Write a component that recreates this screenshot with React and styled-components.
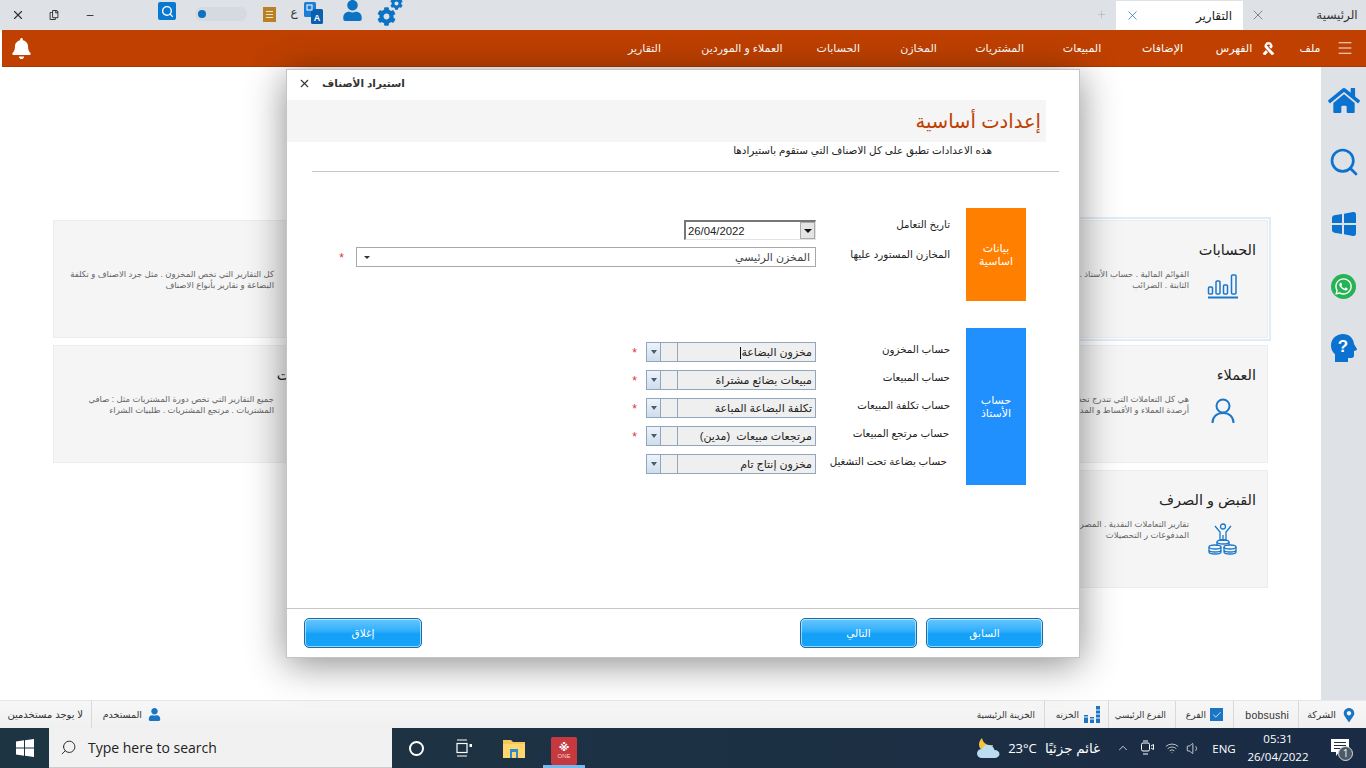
import React from 'react';
import styled, { createGlobalStyle } from 'styled-components';
import { X, Plus, Search, Menu, ChevronUp, Wifi, Volume1, Check } from 'lucide-react';
import { FaHome, FaUser, FaCog, FaWhatsapp, FaBell, FaRibbon, FaMapMarkerAlt, FaRegCopy } from 'react-icons/fa';

const arabic = '"Liberation Sans", "DejaVu Sans", "Noto Sans", sans-serif';

const GlobalStyle = createGlobalStyle`
  html, body { margin: 0; padding: 0; height: 100%; overflow: hidden; background: #fff; }
  body { font-family: ${arabic}; color: #222; }
  * { box-sizing: border-box; }
`;

const Page = styled.div`
  width: 1366px;
  height: 768px;
  display: flex;
  flex-direction: column;
`;

/* top strip with tabs */
const TopBar = styled.div`
  height: 30px;
  background: #dee1e6;
  display: flex;
  justify-content: space-between;
`;
const ToolGroup = styled.div`
  display: flex;
  align-items: flex-start;
`;
const ToolSlot = styled.div`
  width: ${(p) => p.$w}px;
  height: 30px;
  margin-left: ${(p) => p.$ml || 0}px;
  padding-top: ${(p) => p.$pt || 0}px;
  display: flex;
  justify-content: center;
  color: ${(p) => p.$color || '#333'};
  font-size: 12px;
`;
const SearchSquare = styled.div`
  width: 18px;
  height: 18px;
  border-radius: 2px;
  background: #0b78d0;
  color: #fff;
  display: flex;
  align-items: center;
  justify-content: center;
`;
const Toggle = styled.div`
  width: 52px;
  height: 14px;
  margin-top: 7px;
  border-radius: 7px;
  background: #d5d9e0;
  padding: 3px 3px;
  &::before {
    content: '';
    display: block;
    width: 8px;
    height: 8px;
    border-radius: 50%;
    background: #0b6fc2;
  }
`;
const GearWrap = styled.div`
  position: relative;
  width: 26px;
  height: 26px;
  color: #0b72c4;
`;
const SmallGear = styled.span`
  position: absolute;
  right: 0;
  top: -3px;
  line-height: 0;
`;
const BigGear = styled.span`
  position: absolute;
  left: 0;
  bottom: 0;
  line-height: 0;
`;
const Tabs = styled.div`
  display: flex;
  align-items: flex-start;
  padding-right: 3px;
`;
const PlusSlot = styled.div`
  width: 30px;
  height: 29px;
  color: #9aa0a6;
  display: flex;
  align-items: center;
  justify-content: center;
`;
const TabActive = styled.div`
  width: 127px;
  height: 29px;
  margin-top: 1px;
  background: #fff;
  padding: 0 11px 0 9px;
  display: flex;
  align-items: center;
  justify-content: space-between;
  font-size: 12px;
  color: #222;
`;
const TabClose = styled.div`
  width: 29px;
  height: 30px;
  color: #555;
  display: flex;
  align-items: center;
  justify-content: center;
`;
const TabIdle = styled.div`
  width: 52px;
  height: 30px;
  font-size: 12px;
  color: #333;
  display: flex;
  align-items: center;
  justify-content: center;
  margin-left: 39px;
`;

/* orange menu */
const NavBar = styled.div`
  height: 37px;
  margin-left: 2px;
  background: #bf4000;
  color: #fff;
  display: flex;
  align-items: center;
  justify-content: space-between;
  padding: 0 12px 0 9px;
  border-bottom: 1px solid #a93900;
`;
const NavItems = styled.nav`
  display: flex;
  align-items: center;
  direction: rtl;
`;
const NavItem = styled.span`
  width: ${(p) => p.$w}px;
  margin-left: ${(p) => p.$gap}px;
  font-size: 11px;
  text-align: center;
  white-space: nowrap;
`;
const NavIcon = styled.span`
  display: flex;
  margin-left: ${(p) => p.$gap}px;
`;

/* page body */
const Main = styled.main`
  flex: 1;
  position: relative;
  display: flex;
  min-height: 0;
`;
const Content = styled.div`
  flex: 1;
  background: #fff;
  padding: 153px 53px 0 53px;
`;
const CardGrid = styled.div`
  direction: rtl;
  display: grid;
  grid-template-columns: repeat(4, 300px);
  grid-auto-rows: 118px;
  column-gap: 5px;
  row-gap: 7px;
`;
const Card = styled.section`
  grid-column: ${(p) => p.$col};
  background: #f5f5f6;
  border: 1px solid #eaeef3;
  outline: ${(p) => (p.$active ? '2px solid #e2ecf8' : 'none')};
  outline-offset: 1px;
  padding: 18px 11px 0 0;
`;
const CardTitle = styled.h3`
  margin: 0;
  height: 22px;
  font-size: 14.5px;
  line-height: 22px;
  font-weight: 400;
  color: #222;
`;
const CardBody = styled.div`
  display: flex;
  margin-top: 8px;
`;
const CardIcon = styled.div`
  width: 67px;
  flex: none;
  display: flex;
  justify-content: center;
  color: #1b78c8;
  padding-top: 4px;
`;
const CardText = styled.p`
  margin: 0;
  font-size: 8.5px;
  line-height: 11px;
  color: #666;
  white-space: nowrap;
`;

const Rail = styled.aside`
  width: 45px;
  background: #dee1e6;
  display: flex;
  flex-direction: column;
  align-items: center;
  padding-top: 17px;
  gap: 30px;
  color: #0b72d0;
`;
const RailIcon = styled.div`
  width: 32px;
  height: 32px;
  display: flex;
  align-items: center;
  justify-content: center;
`;
const WhatsBadge = styled.div`
  width: 25px;
  height: 25px;
  border-radius: 50%;
  background: #25b354;
  color: #fff;
  display: flex;
  align-items: center;
  justify-content: center;
`;

/* modal */
const Modal = styled.div`
  position: absolute;
  left: 286px;
  top: 2px;
  width: 794px;
  height: 589px;
  background: #fff;
  border: 1px solid #c4c4c4;
  box-shadow: 0 6px 36px rgba(0, 0, 0, 0.45);
  direction: rtl;
  display: flex;
  flex-direction: column;
`;
const ModalTitle = styled.div`
  direction: ltr;
  height: 30px;
  display: flex;
  align-items: center;
  padding: 0 0 4px 11px;
  gap: 11px;
  font-size: 10.5px;
  font-weight: 700;
  color: #333;
`;
const Band = styled.div`
  height: 42px;
  margin-right: 33px;
  background: #f5f5f5;
  padding-right: 5px;
  display: flex;
  align-items: center;
  color: #bf4000;
  font-size: 19.500px;
`;
const Note = styled.div`
  height: 30px;
  margin-right: 87px;
  font-size: 10.4px;
  color: #222;
  padding-top: 2px;
`;
const Rule = styled.hr`
  margin: -1px 20px 0 25px;
  border: 0;
  border-top: 1px solid #c6c6c6;
`;
const ModalBody = styled.div`
  flex: 1;
  padding: 36px 53px 0 0;
  display: flex;
  flex-direction: column;
  gap: 27px;
`;
const Section = styled.div`
  display: flex;
  height: ${(p) => p.$h}px;
`;
const SectionTag = styled.div`
  width: 60px;
  flex: none;
  background: ${(p) => p.$color};
  color: #fff;
  font-size: 11px;
  line-height: 13px;
  text-align: center;
  display: flex;
  align-items: center;
  justify-content: center;
`;
const Fields = styled.div`
  padding: ${(p) => p.$top}px 16px 0 0;
  display: flex;
  flex-direction: column;
  gap: ${(p) => p.$gap}px;
`;
const FieldRow = styled.div`
  display: flex;
  align-items: center;
  height: 20px;
`;
const Label = styled.label`
  width: 134px;
  flex: none;
  padding-right: ${(p) => p.$indent || 0}px;
  font-size: 10.3px;
  color: #222;
  position: relative;
  top: ${(p) => p.$lift ?? -3}px;
  white-space: nowrap;
`;
const DateBox = styled.div`
  direction: ltr;
  width: 132px;
  height: 20px;
  background: #fff;
  border: 1px solid #e2e2e2;
  border-top: 2px solid #777;
  border-left: 2px solid #777;
  display: flex;
  align-items: center;
  justify-content: space-between;
  padding-left: 2px;
  font-size: 11.3px;
  color: #222;
`;
const DateBtn = styled.span`
  width: 15px;
  height: 17px;
  background: #e4e4e4;
  border: 1px solid #aaa;
  display: flex;
  align-items: center;
  justify-content: center;
  &::after {
    content: '';
    border: 4px solid transparent;
    border-top: 4px solid #111;
    border-bottom: 0;
  }
`;
const SelectBox = styled.div`
  width: 460px;
  height: 20px;
  border: 1px solid #a8a8a8;
  background: #fff;
  display: flex;
  align-items: center;
  justify-content: space-between;
  padding: 0 5px;
  font-size: 11px;
  color: #444;
  &::after {
    content: '';
    margin-left: 2px;
    border: 3px solid transparent;
    border-top: 3px solid #333;
    border-bottom: 0;
  }
`;
const Star = styled.span`
  color: #d33;
  font-size: 12px;
  margin-right: ${(p) => p.$gap}px;
  line-height: 1;
  position: relative;
  top: 1px;
`;
const Combo = styled.div`
  width: 170px;
  height: 20px;
  display: flex;
  border: 1px solid #8fa5c0;
  background: #efefef;
`;
const ComboText = styled.div`
  width: 138px;
  flex: none;
  padding-right: 3px;
  font-size: 11px;
  line-height: 18px;
  color: #222;
  white-space: pre;
  border-left: 1px solid #8fa5c0;
  overflow: hidden;
`;
const Caret = styled.span`
  display: inline-block;
  width: 1px;
  height: 12px;
  background: #111;
  vertical-align: middle;
`;
const ComboGap = styled.div`
  width: 16px;
  flex: none;
`;
const ComboBtn = styled.div`
  flex: 1;
  background: linear-gradient(#eef3fa, #cfdcec);
  border-right: 1px solid #8fa5c0;
  display: flex;
  align-items: center;
  justify-content: center;
  &::after {
    content: '';
    border: 3.5px solid transparent;
    border-top: 4px solid #4a5a70;
    border-bottom: 0;
  }
`;
const Footer = styled.footer`
  height: 49px;
  border-top: 1px solid #c6c6c6;
  display: flex;
  align-items: center;
  justify-content: space-between;
  padding: 0 36px 0 17px;
`;
const FooterGroup = styled.div`
  display: flex;
  gap: 9px;
`;
const Btn = styled.button`
  width: ${(p) => p.$w || 117}px;
  height: 30px;
  border: 1px solid #176ea8;
  border-radius: 5px;
  box-shadow: inset 0 0 0 1px rgba(255, 255, 255, 0.55);
  background: linear-gradient(#66c6ff 0%, #35b0fb 40%, #14a0f6 55%, #14a2f8 100%);
  color: #fff;
  font-family: inherit;
  font-size: 10.5px;
  padding: 0;
`;

/* status bar */
const StatusBar = styled.div`
  height: 28px;
  background: linear-gradient(#f7f7f7, #f0f0f0);
  border-top: 1px solid #e6e6e6;
  direction: rtl;
  display: flex;
  justify-content: space-between;
`;
const StatusGroup = styled.div`
  display: flex;
`;
const StatusCell = styled.div`
  width: ${(p) => p.$w}px;
  border-left: ${(p) => (p.$plain ? 'none' : '1px solid #d9d9d9')};
  display: flex;
  align-items: center;
  padding-right: ${(p) => p.$pr || 0}px;
  gap: ${(p) => p.$gap || 0}px;
  font-size: ${(p) => p.$size || 9.5}px;
  color: #333;
  white-space: nowrap;
`;
const Latin = styled.span`
  font-size: 10.5px;
  letter-spacing: 0.2px;
`;
const CheckBoxIcon = styled.span`
  width: 13px;
  height: 13px;
  background: #1a75c4;
  color: #fff;
  display: flex;
  align-items: center;
  justify-content: center;
`;

/* windows taskbar */
const Taskbar = styled.div`
  height: 40px;
  background: linear-gradient(90deg, #1d3542, #1c2f44 70%, #1a2b45);
  display: flex;
  align-items: center;
  color: #fff;
`;
const StartBtn = styled.div`
  width: 49px;
  height: 40px;
  display: flex;
  align-items: center;
  justify-content: center;
`;
const SearchBox = styled.div`
  width: 343px;
  height: 40px;
  background: #f1f1f1;
  border-bottom: 1px solid #ccc;
  color: #222;
  font-family: 'Open Sans', sans-serif;
  font-size: 14px;
  display: flex;
  align-items: center;
  gap: 11px;
  padding-left: 11px;
`;
const TaskSlot = styled.div`
  width: ${(p) => p.$w}px;
  height: 40px;
  margin-left: ${(p) => p.$ml || 0}px;
  position: relative;
  display: flex;
  align-items: center;
  justify-content: center;
`;
const Cortana = styled.span`
  width: 15px;
  height: 15px;
  border-radius: 50%;
  border: 2px solid #fff;
`;
const AppTile = styled.div`
  width: 26px;
  height: 28px;
  margin-top: 6px;
  background: #c63a3f;
  border-radius: 2px;
  text-align: center;
  font-size: 6px;
  line-height: 7px;
  color: #f3d0d0;
  padding-top: 5px;
`;
const AppMark = styled.div`
  font-size: 11px;
  line-height: 11px;
  font-weight: 700;
  color: #fff;
`;
const ActiveStrip = styled.span`
  position: absolute;
  left: 0;
  right: 0;
  bottom: 0;
  height: 3px;
  background: #76b9ed;
`;
const Tray = styled.div`
  margin-left: auto;
  display: flex;
  align-items: center;
  height: 40px;
  font-family: 'Open Sans', ${arabic};
  font-size: 12px;
`;
const TraySlot = styled.div`
  width: ${(p) => p.$w}px;
  margin-left: ${(p) => p.$ml || 0}px;
  text-align: center;
  display: flex;
  align-items: center;
  justify-content: center;
  white-space: nowrap;
  font-size: ${(p) => p.$size || 12}px;
`;
const Clock = styled.div`
  width: 72px;
  text-align: center;
  font-size: 11.5px;
  line-height: 18px;
`;
const NoticeWrap = styled.div`
  position: relative;
  width: 52px;
  height: 40px;
  display: flex;
  align-items: center;
  justify-content: center;
`;
const NoticeBadge = styled.span`
  position: absolute;
  right: 13px;
  bottom: 7px;
  width: 15px;
  height: 15px;
  border-radius: 50%;
  background: #4a5a66;
  border: 1px solid #ddd;
  font-size: 10px;
  line-height: 13px;
  text-align: center;
`;

const WinLogo = ({ size = 18, color = '#fff' }) => (
  <svg width={size} height={size} viewBox="0 0 18 18" fill={color}>
    <path d="M0 2.5 8 1.3V8.5H0ZM9 1.2 18 0V8.5H9ZM0 9.5H8V16.7L0 15.5ZM9 9.5H18V18L9 16.8Z" />
  </svg>
);

const RoundWindows = () => (
  <svg width="30" height="30" viewBox="0 0 30 30" fill="#0b72d0">
    <path d="M3 9C3 7.5 4 6.6 5.5 6.3L13 5V14H3ZM15 4.7 24 3C26 2.7 27 3.8 27 5.5V14H15ZM3 16H13V25L5.5 23.7C4 23.4 3 22.5 3 21ZM15 16H27V24.5C27 26.2 26 27.3 24 27L15 25.3Z" />
  </svg>
);

const HelpHead = () => (
  <svg width="30" height="32" viewBox="0 0 30 32">
    <path
      fill="#0b72d0"
      d="M14 2C7 2 2 7 2 13.5c0 4 1.6 6.6 4 8.8V30h13v-4h3.5c1.6 0 2.5-1 2.5-2.5V19l2.4-.8c.7-.3.8-.9.4-1.5L25 12C24.500 6 20 2 14 2Z"
    />
    <text x="14" y="20" fontSize="17" fontWeight="700" fill="#fff" textAnchor="middle" fontFamily="Liberation Sans">?</text>
  </svg>
);

const BookIcon = () => (
  <svg width="13" height="15" viewBox="0 0 13 15">
    <rect width="13" height="15" fill="#b98026" />
    <path d="M3 4.500h7M3 7.500h7M3 10.500h7" stroke="#f3e2c0" strokeWidth="1" />
  </svg>
);

const TranslateIcon = () => (
  <svg width="19" height="23" viewBox="0 0 19 23">
    <rect x="0" y="1" width="12" height="15" rx="1.5" fill="#1a7fd4" />
    <rect x="7" y="8" width="12" height="15" rx="1.500" fill="#0b5fb0" />
    <text x="13" y="20" fontSize="9" fontWeight="700" fill="#fff" textAnchor="middle" fontFamily="Liberation Sans">A</text>
    <rect x="3" y="4" width="5" height="5" fill="none" stroke="#fff" strokeWidth="1" />
  </svg>
);

const BarsIcon = () => (
  <svg width="32" height="26" viewBox="0 0 32 26" fill="none" stroke="#1b78c8" strokeWidth="1.5">
    <rect x="1.500" y="14" width="4" height="7" rx="1" />
    <rect x="9" y="8" width="4" height="13" rx="1" />
    <rect x="16.500" y="12" width="4" height="9" rx="1" />
    <rect x="24.500" y="2" width="4.500" height="19" rx="1" />
    <path d="M1 24.500H31" strokeWidth="2" />
  </svg>
);

const PersonIcon = () => (
  <svg width="24" height="26" viewBox="0 0 24 26" fill="none" stroke="#1b78c8" strokeWidth="2">
    <circle cx="12" cy="8" r="6.500" />
    <path d="M1.500 25c0-6 4-10 10.500-10s10.500 4 10.500 10" />
  </svg>
);

const CoinsIcon = () => (
  <svg width="30" height="32" viewBox="0 0 30 32" fill="none" stroke="#1b78c8" strokeWidth="1.300">
    <circle cx="15" cy="3.500" r="2.500" />
    <path d="M7 3l5 6v8h6V9l5-6M15 12v5" />
    <ellipse cx="15" cy="19" rx="6" ry="2" />
    <ellipse cx="7" cy="24" rx="6" ry="2" />
    <ellipse cx="22" cy="24" rx="6" ry="2" />
    <path d="M1 24v5c0 1.300 3 2 6 2s6-.7 6-2v-5M1 27c0 1.300 3 2 6 2s6-.7 6-2M16 24v5c0 1.300 3 2 6 2s6-.7 6-2v-5M9 19v4M21 19v3M16 27c0 1.300 3 2 6 2s6-.7 6-2" />
  </svg>
);

const BarsSmall = () => (
  <svg width="16" height="17" viewBox="0 0 16 17" fill="#1a75c4">
    <path d="M0 9h4v8H0ZM6 11h4v6H6ZM12 0h4v17h-4Z" />
    <path d="M0 11h4M6 13h4M12 4h4M12 8h4M12 12h4" stroke="#f5f5f5" strokeWidth="1" />
  </svg>
);

const FolderIcon = () => (
  <svg width="22" height="20" viewBox="0 0 22 20">
    <path d="M0 2h8l2 2h12v16H0Z" fill="#f6c65b" />
    <path d="M0 6h22v14H0Z" fill="#ffd76e" />
    <path d="M7 11h8v9H7Z" fill="#2f8bd0" />
    <path d="M9 14h4v6H9Z" fill="#ffd76e" />
  </svg>
);

const TaskView = () => (
  <svg width="18" height="18" viewBox="0 0 18 18" fill="none" stroke="#fff" strokeWidth="1.200">
    <path d="M2 1h10M2 17h10" />
    <rect x="2" y="4.500" width="10" height="9" />
    <rect x="14.500" y="5" width="2.500" height="3" fill="#fff" stroke="none" />
  </svg>
);

const WeatherIcon = () => (
  <svg width="24" height="24" viewBox="0 0 24 24">
    <path d="M6 2c1 5 5 8 11 7-1 5-7 7-11 5C2 11 2 6 6 2Z" fill="#f5c43d" />
    <path d="M6 22c-3 0-5-2-5-4.500S3 13 6 13c1-3 4-4.500 7-4 3 .4 5 2.500 5.500 5 3 0 5 2 5 4s-2 4-5 4Z" fill="#bcdcf2" />
  </svg>
);

const MeetIcon = () => (
  <svg width="14" height="16" viewBox="0 0 14 16" fill="none" stroke="#fff" strokeWidth="1">
    <rect x="1.500" y="3" width="8" height="8" rx="1.500" />
    <path d="M3 1h5M3 14h5M11 6l2.500-1.500v5L11 8" />
  </svg>
);

const NoticeIcon = () => (
  <svg width="18" height="18" viewBox="0 0 18 18">
    <path d="M0 0h18v13H8l-3 4v-4H0Z" fill="#fff" />
    <path d="M3 3.500h12M3 6.500h12M3 9.500h7" stroke="#1c2f44" strokeWidth="1" />
  </svg>
);

const navItems = [
  ['الإضافات', 41, 40],
  ['المبيعات', 40, 38],
  ['المشتريات', 46, 41],
  ['المخازن', 37, 40],
  ['الحسابات', 42, 32],
  ['العملاء و الموردين', 88, 37],
  ['التقارير', 32, 0],
];

const cards = [
  {
    col: 1,
    title: 'الحسابات',
    active: true,
    icon: <BarsIcon />,
    text: ['القوائم المالية . حساب الأستاذ . الأصول', 'الثابتة . الضرائب'],
  },
  {
    col: 4,
    title: 'المخازن',
    text: ['كل التقارير التي تخص المخزون . مثل جرد الاصناف و تكلفة', 'البضاعة  و تقارير بأنواع الاصناف'],
  },
  {
    col: 1,
    title: 'العملاء',
    icon: <PersonIcon />,
    text: ['هي كل التعاملات التي تندرج تحت العملاء', 'أرصدة العملاء و الأقساط و المدفوعات'],
  },
  {
    col: 4,
    title: 'المشتريات',
    text: ['جميع التقارير التي تخص دورة المشتريات مثل : صافي', 'المشتريات . مرتجع المشتريات . طلبيات الشراء'],
  },
  {
    col: 1,
    title: 'القبض و الصرف',
    icon: <CoinsIcon />,
    text: ['تقارير التعاملات النقدية . المصروفات', 'المدفوعات ر التحصيلات'],
  },
];

const accounts = [
  { label: 'حساب المخزون', value: 'مخزون البضاعة', required: true, caret: true },
  { label: 'حساب المبيعات', value: 'مبيعات بضائع مشتراة', required: true },
  { label: 'حساب تكلفة المبيعات', value: 'تكلفة البضاعة المباعة', required: true },
  { label: 'حساب مرتجع المبيعات', value: 'مرتجعات مبيعات  (مدين)', required: true, indent: 1 },
  { label: 'حساب بضاعة تحت التشغيل', value: 'مخزون إنتاج تام', indent: 3 },
];

export default function App() {
  return (
    <Page>
      <GlobalStyle />
      <TopBar>
        <ToolGroup>
          <ToolSlot $w={36} $pt={8}><X size={14} /></ToolSlot>
          <ToolSlot $w={36} $pt={10}><FaRegCopy size={10} /></ToolSlot>
          <ToolSlot $w={36} $pt={8}>–</ToolSlot>
          <ToolSlot $w={18} $ml={50} $pt={2}><SearchSquare><Search size={13} strokeWidth={2.500} /></SearchSquare></ToolSlot>
          <ToolSlot $w={52} $ml={19}><Toggle /></ToolSlot>
          <ToolSlot $w={13} $ml={16} $pt={7}><BookIcon /></ToolSlot>
          <ToolSlot $w={16} $ml={10} $pt={5}>ع</ToolSlot>
          <ToolSlot $w={19} $ml={2} $pt={1}><TranslateIcon /></ToolSlot>
          <ToolSlot $w={22} $ml={18} $pt={0} $color="#0b72c4"><FaUser size={21} /></ToolSlot>
          <ToolSlot $w={26} $ml={14}>
            <GearWrap>
              <BigGear><FaCog size={19} /></BigGear>
              <SmallGear><FaCog size={13} /></SmallGear>
            </GearWrap>
          </ToolSlot>
        </ToolGroup>
        <Tabs>
          <PlusSlot><Plus size={11} strokeWidth={1} /></PlusSlot>
          <TabActive>
            <X size={15} strokeWidth={1.200} color="#1978c8" />
            <span>التقارير</span>
          </TabActive>
          <TabClose><X size={16} strokeWidth={1} /></TabClose>
          <TabIdle>الرئيسية</TabIdle>
        </Tabs>
      </TopBar>

      <NavBar>
        <FaBell size={21} />
        <NavItems>
          <NavIcon $gap={15}><Menu size={18} strokeWidth={1.200} /></NavIcon>
          <NavItem $w={22} $gap={24}>ملف</NavItem>
          <NavIcon $gap={9}><FaRibbon size={13} /></NavIcon>
          <NavItem $w={38} $gap={32}>الفهرس</NavItem>
          {navItems.map(([name, w, gap]) => (
            <NavItem key={name} $w={w} $gap={gap}>{name}</NavItem>
          ))}
        </NavItems>
      </NavBar>

      <Main>
        <Content>
          <CardGrid>
            {cards.map((card) => (
              <Card key={card.title} $col={card.col} $active={card.active}>
                <CardTitle>{card.title}</CardTitle>
                <CardBody>
                  <CardIcon>{card.icon}</CardIcon>
                  <CardText>{card.text[0]}<br />{card.text[1]}</CardText>
                </CardBody>
              </Card>
            ))}
          </CardGrid>
        </Content>
        <Rail>
          <RailIcon><FaHome size={33} /></RailIcon>
          <RailIcon><Search size={32} strokeWidth={2} /></RailIcon>
          <RailIcon><RoundWindows /></RailIcon>
          <RailIcon><WhatsBadge><FaWhatsapp size={19} /></WhatsBadge></RailIcon>
          <RailIcon><HelpHead /></RailIcon>
        </Rail>

        <Modal>
          <ModalTitle>
            <X size={13} strokeWidth={2} />
            <span>استيراد الأصناف</span>
          </ModalTitle>
          <Band>إعدادت أساسية</Band>
          <Note>هذه الاعدادات تطبق على كل الاصناف التي ستقوم باستيرادها</Note>
          <Rule />
          <ModalBody>
            <Section $h={93}>
              <SectionTag $color="#ff8000">بيانات<br />اساسية</SectionTag>
              <Fields $top={12} $gap={7}>
                <FieldRow>
                  <Label $lift={-6}>تاريخ التعامل</Label>
                  <DateBox>26/04/2022<DateBtn /></DateBox>
                </FieldRow>
                <FieldRow>
                  <Label>المخازن المستورد عليها</Label>
                  <SelectBox>المخزن الرئيسي</SelectBox>
                  <Star $gap={12}>*</Star>
                </FieldRow>
              </Fields>
            </Section>
            <Section $h={157}>
              <SectionTag $color="#2090ff">حساب<br />الأستاذ</SectionTag>
              <Fields $top={14} $gap={8}>
                {accounts.map((row) => (
                  <FieldRow key={row.label}>
                    <Label $indent={row.indent}>{row.label}</Label>
                    <Combo>
                      <ComboText>{row.value}{row.caret && <Caret />}</ComboText>
                      <ComboGap />
                      <ComboBtn />
                    </Combo>
                    {row.required && <Star $gap={9}>*</Star>}
                  </FieldRow>
                ))}
              </Fields>
            </Section>
          </ModalBody>
          <Footer>
            <FooterGroup>
              <Btn>السابق</Btn>
              <Btn>التالي</Btn>
            </FooterGroup>
            <Btn $w={118}>إغلاق</Btn>
          </Footer>
        </Modal>
      </Main>

      <StatusBar>
        <StatusGroup>
          <StatusCell $w={68} $pr={10} $gap={6}><FaMapMarkerAlt size={14} color="#1a75c4" />الشركة</StatusCell>
          <StatusCell $w={65} $pr={9}><Latin>bobsushi</Latin></StatusCell>
          <StatusCell $w={58} $pr={10} $gap={4} $size={9}><CheckBoxIcon><Check size={10} /></CheckBoxIcon>الفرع</StatusCell>
          <StatusCell $w={67} $pr={9} $size={8.6}>الفرع الرئيسي</StatusCell>
          <StatusCell $w={64} $pr={8} $gap={5} $size={9}><BarsSmall />الخزنه</StatusCell>
          <StatusCell $w={74} $pr={9} $size={8.8} $plain>الخزينة الرئيسية</StatusCell>
        </StatusGroup>
        <StatusGroup>
          <StatusCell $w={79} $pr={9} $gap={6}><FaUser size={13} color="#1a75c4" />المستخدم</StatusCell>
          <StatusCell $w={91} $pr={8} $size={10} $plain>لا يوجد مستخدمين</StatusCell>
        </StatusGroup>
      </StatusBar>

      <Taskbar>
        <StartBtn><WinLogo /></StartBtn>
        <SearchBox><Search size={17} strokeWidth={1.300} style={{ transform: 'scaleX(-1)' }} />Type here to search</SearchBox>
        <TaskSlot $w={48}><Cortana /></TaskSlot>
        <TaskSlot $w={48}><TaskView /></TaskSlot>
        <TaskSlot $w={52}><FolderIcon /></TaskSlot>
        <TaskSlot $w={42} $ml={3}>
          <AppTile><AppMark>※</AppMark>ONE</AppTile>
          <ActiveStrip />
        </TaskSlot>
        <Tray>
          <TraySlot $w={24}><WeatherIcon /></TraySlot>
          <TraySlot $w={36} $ml={4.500} $size={13}>23°C</TraySlot>
          <TraySlot $w={55} $ml={4.500} $size={13.500}>غائم جزئيًا</TraySlot>
          <TraySlot $w={14} $ml={16}><ChevronUp size={16} strokeWidth={1.300} /></TraySlot>
          <TraySlot $w={34}><MeetIcon /></TraySlot>
          <TraySlot $w={16}><Wifi size={14} strokeWidth={1.200} /></TraySlot>
          <TraySlot $w={26}><Volume1 size={15} strokeWidth={1.200} /></TraySlot>
          <TraySlot $w={36} $size={11.500}>ENG</TraySlot>
          <Clock>05:31<br />26/04/2022</Clock>
          <NoticeWrap><NoticeIcon /><NoticeBadge>1</NoticeBadge></NoticeWrap>
        </Tray>
      </Taskbar>
    </Page>
  );
}
